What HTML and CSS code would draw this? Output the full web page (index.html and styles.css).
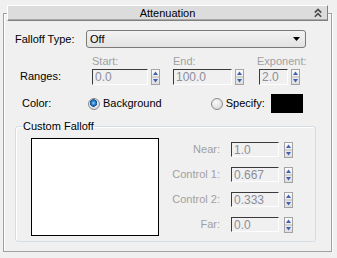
FILE: index.html
```html
<!DOCTYPE html>
<html lang="en">
<head>
  <meta charset="UTF-8" />
  <title>Attenuation</title>
  <link rel="stylesheet" href="styles.css">
</head>
<body>

  <div class="rollout">
    <div class="title-bar">
      <span></span>
      <span class="title">Attenuation</span>
      <svg class="chevron" width="8" height="10" viewBox="0 0 8 10">
        <polyline points="0.8,4.6 4,1.4 7.2,4.6" fill="none" stroke="#4a4a4a" stroke-width="1.6" />
        <polyline points="0.8,8.8 4,5.6 7.2,8.8" fill="none" stroke="#4a4a4a" stroke-width="1.6" />
      </svg>
    </div>

    <div class="rollout-body">
      <div class="falloff-row">
        <span class="falloff-label">Falloff Type:</span>
        <div class="dropdown">
          <span>Off</span>
          <svg width="7" height="4" viewBox="0 0 7 4"><polygon points="0,0 7,0 3.5,4" fill="#000" /></svg>
        </div>
      </div>

      <div class="ranges-row">
        <span class="ranges-label">Ranges:</span>
        <div class="spin-group start">
          <span class="hdr">Start:</span>
          <div class="spin-line">
            <div class="field w-start">0.0</div>
            <svg class="spinner" width="9" height="16" viewBox="0 0 9 16"><use href="#spin" /></svg>
          </div>
        </div>
        <div class="spin-group end">
          <span class="hdr">End:</span>
          <div class="spin-line">
            <div class="field w-end">100.0</div>
            <svg class="spinner" width="9" height="16" viewBox="0 0 9 16"><use href="#spin" /></svg>
          </div>
        </div>
        <div class="spin-group exp">
          <span class="hdr">Exponent:</span>
          <div class="spin-line">
            <div class="field w-exp">2.0</div>
            <svg class="spinner" width="9" height="16" viewBox="0 0 9 16"><use href="#spin" /></svg>
          </div>
        </div>
      </div>

      <div class="color-row">
        <span class="color-label">Color:</span>
        <span class="radio checked"></span>
        <span class="radio-text">Background</span>
        <span class="radio specify"></span>
        <span class="radio-text">Specify:</span>
        <span class="swatch"></span>
      </div>

      <fieldset class="custom">
        <legend>Custom Falloff</legend>
        <div class="custom-inner">
          <div class="graph"></div>
          <div class="ctrl-list">
            <div class="ctrl-row">
              <span class="ctrl-label">Near:</span>
              <div class="field w-ctrl">1.0</div>
              <svg class="spinner" width="9" height="16" viewBox="0 0 9 16"><use href="#spin" /></svg>
            </div>
            <div class="ctrl-row">
              <span class="ctrl-label">Control 1:</span>
              <div class="field w-ctrl">0.667</div>
              <svg class="spinner" width="9" height="16" viewBox="0 0 9 16"><use href="#spin" /></svg>
            </div>
            <div class="ctrl-row">
              <span class="ctrl-label">Control 2:</span>
              <div class="field w-ctrl">0.333</div>
              <svg class="spinner" width="9" height="16" viewBox="0 0 9 16"><use href="#spin" /></svg>
            </div>
            <div class="ctrl-row">
              <span class="ctrl-label">Far:</span>
              <div class="field w-ctrl">0.0</div>
              <svg class="spinner" width="9" height="16" viewBox="0 0 9 16"><use href="#spin" /></svg>
            </div>
          </div>
        </div>
      </fieldset>
    </div>
  </div>

  <svg width="0" height="0" class="defs">
    <defs>
      <linearGradient id="spinBg" x1="0" y1="0" x2="0" y2="1">
        <stop offset="0" stop-color="#fbfbfb" />
        <stop offset="1" stop-color="#dedede" />
      </linearGradient>
      <g id="spin">
        <rect x="0.5" y="0.5" width="8" height="15" fill="url(#spinBg)" stroke="#a3a3a3" />
        <line x1="1" y1="8" x2="8" y2="8" stroke="#b8b8b8" />
        <polygon points="2,6 7,6 4.5,2.5" fill="#4060b0" />
        <polygon points="2,10 7,10 4.5,13.5" fill="#4060b0" />
      </g>
    </defs>
  </svg>

</body>
</html>
```

FILE: styles.css
```css
body {
  margin: 0;
  background: #f0f0f0;
  color: #000;
  font-family: "Liberation Sans", Arial, sans-serif;
  font-size: 11px;
  line-height: 13px;
}
.defs { position: absolute; }

.rollout {
  margin: 13px 0 0 3px;
  width: 327px;
  height: 237px;
  border: 1px solid #a0a0a0;
  box-shadow: 1px 1px 0 #fff, inset 1px 1px 0 #fff;
}
.title-bar {
  display: grid;
  grid-template-columns: 1fr auto 1fr;
  align-items: center;
  margin: -9px 0 0 3px;
  width: 319px;
  height: 14px;
  background: #dcdcdc;
  border: 1px solid;
  border-color: #fff #808080 #808080 #fff;
  box-shadow: inset 0 -1px 0 #a8a8a8;
}
.chevron { justify-self: end; margin-right: 5px; }

.rollout-body { padding: 9px 0 0 11px; }

.falloff-row { display: flex; align-items: center; height: 18px; }
.falloff-label { width: 71px; }
.dropdown {
  display: flex;
  align-items: center;
  justify-content: space-between;
  box-sizing: border-box;
  width: 220px;
  height: 18px;
  padding: 0 5px 0 3px;
  border: 1px solid #7a7a7a;
  border-radius: 3px;
  background: linear-gradient(#f3f3f3, #e2e2e2);
}

.ranges-row { display: flex; align-items: flex-end; margin-top: 7px; }
.ranges-label { width: 72px; margin-left: 5px; height: 16px; line-height: 15px; }
.spin-group { display: flex; flex-direction: column; }
.hdr { color: #a0a0a0; height: 13px; margin-bottom: 1px; }
.spin-line { display: flex; align-items: flex-start; gap: 3px; }
.end { margin-left: 13px; }
.exp { margin-left: 15px; }
.exp .hdr { margin-left: -2px; }

.field {
  box-sizing: border-box;
  height: 16px;
  padding: 1px 0 0 2px;
  border: 1px solid;
  border-color: #3a3a3a #fdfdfd #fdfdfd #3a3a3a;
  background: #f0f0f0;
  color: #8d8d9b;
  font-size: 12px;
  line-height: 13px;
}
.w-start { width: 56px; }
.w-end { width: 59px; }
.w-exp { width: 29px; }
.w-ctrl { width: 48px; height: 15px; line-height: 12px; }

.color-row { display: flex; align-items: center; margin-top: 9px; height: 19px; }
.color-label { width: 66px; margin-left: 7px; }
.radio {
  box-sizing: border-box;
  width: 12px;
  height: 12px;
  border: 1px solid #8a8a8a;
  border-radius: 50%;
  background: radial-gradient(circle at 40% 35%, #fafafa, #d0d0d0);
}
.radio.checked {
  background: radial-gradient(circle at 45% 40%, #8fd0ff 0, #2a7fc8 2px, #0d4f8f 3.5px, #e8e8e8 4px, #d8d8d8 6px);
}
.radio-text { margin-left: 3px; }
.specify { margin-left: 49px; }
.swatch { width: 32px; height: 19px; margin-left: 6px; background: #000; }

.custom {
  box-sizing: border-box;
  width: 301px;
  margin: 7px 0 0 0;
  padding: 5px 0 5px 15px;
  border: 1px solid #d5dce2;
  border-radius: 3px;
  box-shadow: inset 1px 1px 0 #fff;
}
.custom legend { padding: 0 1px; margin-left: -9px; }
.custom-inner { display: flex; }
.graph {
  box-sizing: border-box;
  width: 128px;
  height: 98px;
  border: 1px solid #000;
  background: #fff;
}
.ctrl-list { display: flex; flex-direction: column; gap: 10px; padding-top: 4px; }
.ctrl-row { display: flex; align-items: center; height: 15px; }
.ctrl-label { width: 61px; text-align: right; color: #a0a0a0; margin-right: 11px; }
.ctrl-row .spinner { margin-left: 5px; }
```
